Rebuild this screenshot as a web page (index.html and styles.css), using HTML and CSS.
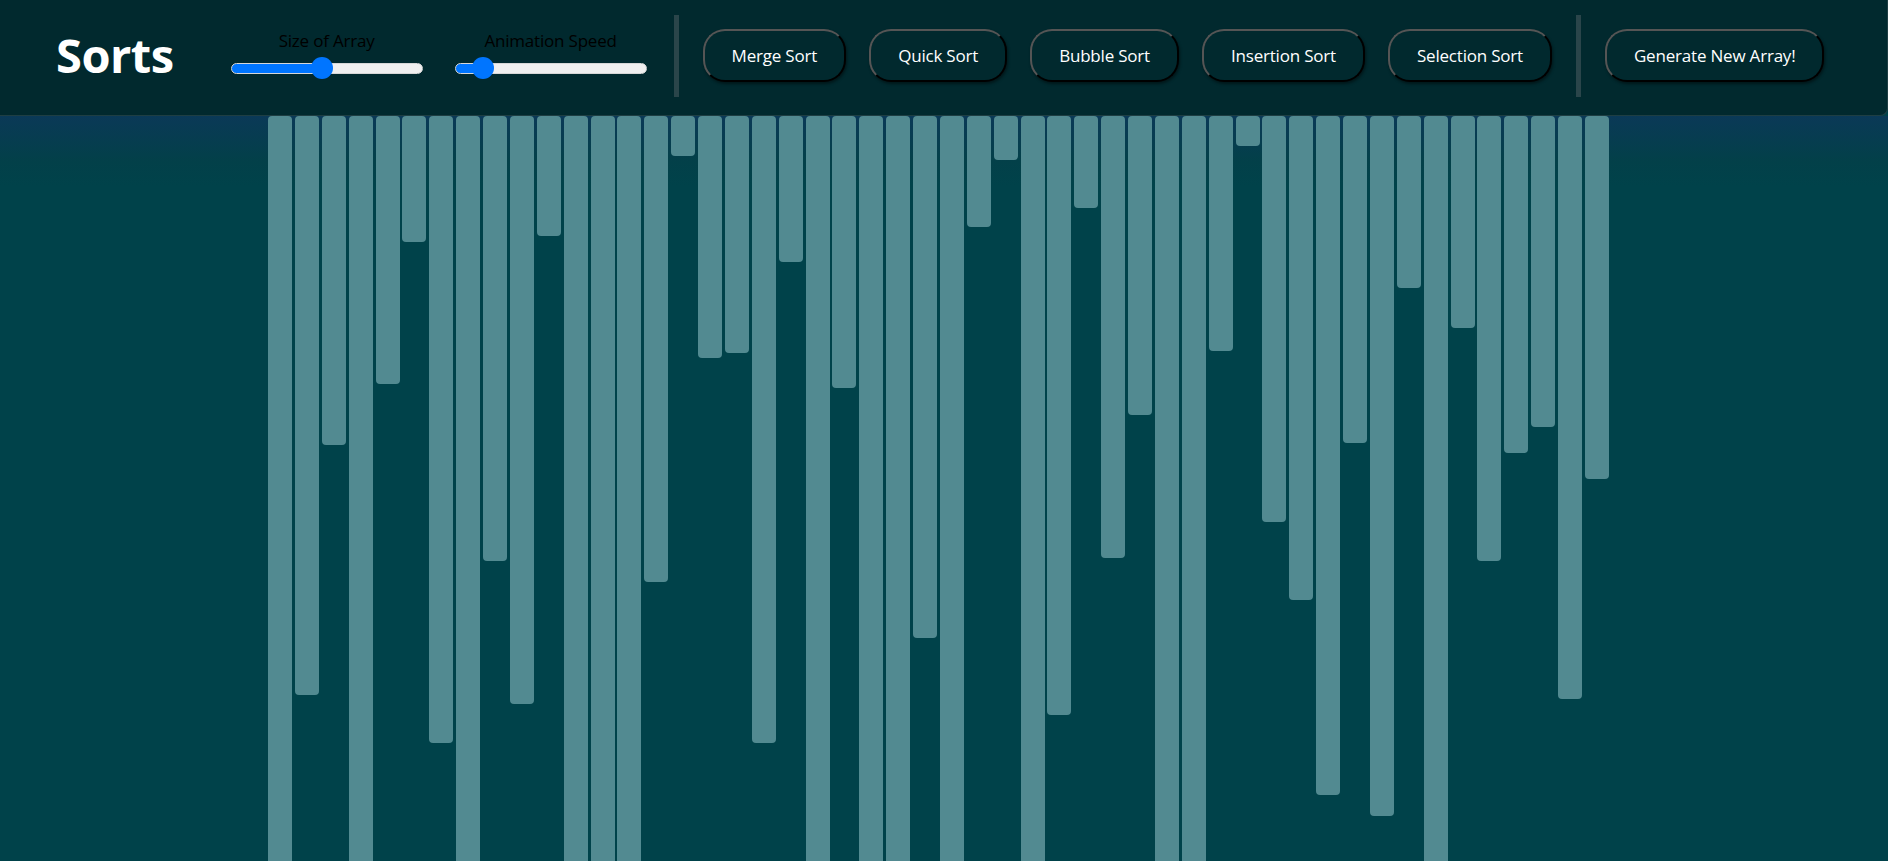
FILE: index.html
```html
<!DOCTYPE html>
<html lang="en">
<head>
<meta charset="utf-8">
<title>Sorts</title>
<link rel="stylesheet" href="styles.css">
</head>
<body>
<header class="topbar">
  <h1 class="brand">Sorts</h1>
  <div class="control">
    <label class="control-label" for="size">Size of Array</label>
    <input type="range" id="size" class="slider" min="0" max="100" value="47" style="--fill: 47.7%">
  </div>
  <div class="control">
    <label class="control-label" for="speed">Animation Speed</label>
    <input type="range" id="speed" class="slider" min="0" max="100" value="10" style="--fill: 15%">
  </div>
  <span class="divider divider-left"></span>
  <nav class="sort-buttons">
    <button class="btn">Merge Sort</button>
    <button class="btn">Quick Sort</button>
    <button class="btn">Bubble Sort</button>
    <button class="btn">Insertion Sort</button>
    <button class="btn">Selection Sort</button>
  </nav>
  <span class="divider"></span>
  <button class="btn">Generate New Array!</button>
</header>
<main class="stage">
  <div class="bars">
    <div class="bar" style="height:780px"></div>
    <div class="bar" style="height:579px"></div>
    <div class="bar" style="height:329px"></div>
    <div class="bar" style="height:780px"></div>
    <div class="bar" style="height:268px"></div>
    <div class="bar" style="height:126px"></div>
    <div class="bar" style="height:627px"></div>
    <div class="bar" style="height:780px"></div>
    <div class="bar" style="height:445px"></div>
    <div class="bar" style="height:588px"></div>
    <div class="bar" style="height:120px"></div>
    <div class="bar" style="height:780px"></div>
    <div class="bar" style="height:780px"></div>
    <div class="bar" style="height:780px"></div>
    <div class="bar" style="height:466px"></div>
    <div class="bar" style="height:40px"></div>
    <div class="bar" style="height:242px"></div>
    <div class="bar" style="height:237px"></div>
    <div class="bar" style="height:627px"></div>
    <div class="bar" style="height:146px"></div>
    <div class="bar" style="height:780px"></div>
    <div class="bar" style="height:272px"></div>
    <div class="bar" style="height:780px"></div>
    <div class="bar" style="height:780px"></div>
    <div class="bar" style="height:522px"></div>
    <div class="bar" style="height:780px"></div>
    <div class="bar" style="height:111px"></div>
    <div class="bar" style="height:44px"></div>
    <div class="bar" style="height:780px"></div>
    <div class="bar" style="height:599px"></div>
    <div class="bar" style="height:92px"></div>
    <div class="bar" style="height:442px"></div>
    <div class="bar" style="height:299px"></div>
    <div class="bar" style="height:780px"></div>
    <div class="bar" style="height:780px"></div>
    <div class="bar" style="height:235px"></div>
    <div class="bar" style="height:30px"></div>
    <div class="bar" style="height:406px"></div>
    <div class="bar" style="height:484px"></div>
    <div class="bar" style="height:679px"></div>
    <div class="bar" style="height:327px"></div>
    <div class="bar" style="height:700px"></div>
    <div class="bar" style="height:172px"></div>
    <div class="bar" style="height:780px"></div>
    <div class="bar" style="height:212px"></div>
    <div class="bar" style="height:445px"></div>
    <div class="bar" style="height:337px"></div>
    <div class="bar" style="height:311px"></div>
    <div class="bar" style="height:583px"></div>
    <div class="bar" style="height:363px"></div>
  </div>
</main>
</body>
</html>
```

FILE: styles.css
```css
* { box-sizing: border-box; }

html, body {
  margin: 0;
  height: 100%;
}

body {
  background: #00424a;
  font-family: "Open Sans", "Noto Sans", sans-serif;
  overflow: hidden;
}

.topbar {
  display: flex;
  align-items: center;
  height: 116px;
  padding: 0 0 4px 56px;
  background: #01292e;
  border-right: 1px solid #1e3e43;
  border-bottom: 1px solid #1e3e43;
  border-bottom-right-radius: 8px;
}

.brand {
  margin: 0 57px 0 0;
  font-size: 47px;
  font-weight: 700;
  color: #ffffff;
  line-height: 1;
  letter-spacing: -0.5px;
}

.control {
  display: flex;
  flex-direction: column;
  align-items: center;
  width: 192px;
  margin-right: 32px;
  margin-top: -2px;
}

.control + .control { margin-right: 27px; }

.control-label {
  font-size: 17px;
  line-height: 22px;
  color: #000000;
  margin-bottom: 5px;
  letter-spacing: -0.2px;
}

.slider {
  -webkit-appearance: none;
  appearance: none;
  width: 192px;
  height: 22px;
  margin: 0;
  background: transparent;
}

.slider::-webkit-slider-runnable-track {
  height: 11px;
  border-radius: 6px;
  border: 1px solid #d6d6d6;
  background: linear-gradient(to right, #0075ff 0, #0075ff var(--fill), #efefef var(--fill), #efefef 100%);
}

.slider::-webkit-slider-thumb {
  -webkit-appearance: none;
  appearance: none;
  width: 22px;
  height: 22px;
  margin-top: -6.5px;
  border-radius: 50%;
  background: #0075ff;
  border: none;
}

.divider {
  width: 5px;
  height: 82px;
  background: #2a454a;
  margin: 0 24px;
  flex: none;
}

.divider-left { margin-left: 0; }

.sort-buttons {
  display: flex;
  gap: 23px;
}

.btn {
  display: inline-flex;
  align-items: center;
  height: 53px;
  padding: 0 27px;
  background: #01292e;
  color: #ffffff;
  font-family: "Open Sans", "Noto Sans", sans-serif;
  font-size: 17px;
  letter-spacing: -0.2px;
  border: 2px solid;
  border-color: #555555 #000000 #000000 #555555;
  border-radius: 22px;
  box-shadow: 1px 2px 3px rgba(0, 0, 0, 0.45);
  white-space: nowrap;
}

.stage {
  height: calc(100vh - 116px);
  overflow: hidden;
  background: linear-gradient(to bottom, #0a3957 0, #034049 45px, #00424a 70px, #00424a 100%);
}

.bars {
  display: flex;
  align-items: flex-start;
  gap: 2.88px;
  margin-left: 268px;
}

.bar {
  width: 24px;
  flex: none;
  background: #528a91;
  border-radius: 4px;
}
```
